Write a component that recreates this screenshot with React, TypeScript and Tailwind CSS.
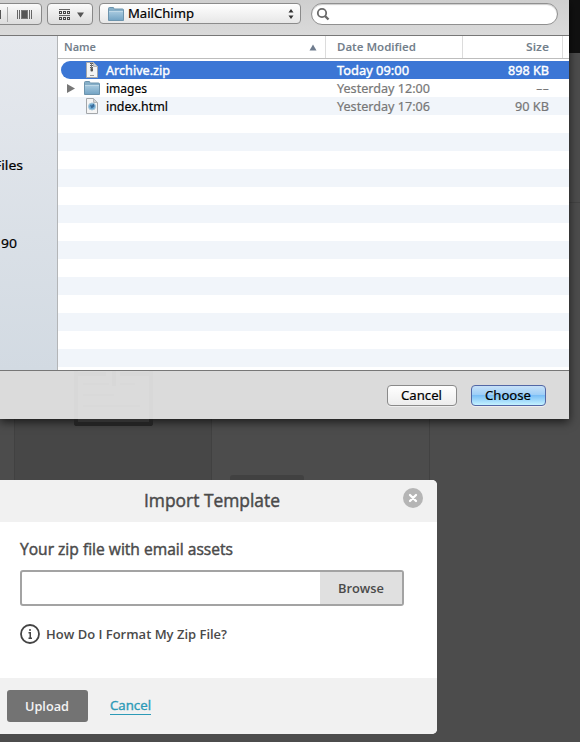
import React from "react";

const mac = "font-['Noto_Sans','Open_Sans',sans-serif]";

const files = [
  { name: "Archive.zip", date: "Today 09:00", size: "898 KB", kind: "zip" },
  { name: "images", date: "Yesterday 12:00", size: "--", kind: "folder" },
  { name: "index.html", date: "Yesterday 17:06", size: "90 KB", kind: "html" },
];

// A single line of text fitted to a fixed advance width; bold thickens its strokes slightly.
function Label({ text, width, size, fill, weight = 400, family = "Noto Sans", bold = 0 }: {
  text: string; width: number; size: number; fill: string; weight?: number; family?: string; bold?: number;
}) {
  return (
    <svg width={width} height="20" className="block shrink-0 overflow-visible">
      <text x="0" y="15" textLength={width} lengthAdjust="spacingAndGlyphs" fontSize={size} fontWeight={weight} fill={fill} stroke={bold ? fill : "none"} strokeWidth={bold} fontFamily={`"${family}", "Open Sans", sans-serif`}>{text}</text>
    </svg>
  );
}

function Folder() {
  return (
    <svg width="16" height="14" viewBox="0 0 16 14" className="block shrink-0">
      <defs>
        <linearGradient id="fold" x1="0" y1="0" x2="0" y2="1">
          <stop offset="0" stopColor="#a9cbe0" /><stop offset="1" stopColor="#75a5c5" />
        </linearGradient>
      </defs>
      <path d="M.5 3V1.5Q.5.5 1.500.5H5Q6 .5 6 1.500L6.500 2H14.500Q15.500 2 15.500 3V13.500H.5Z" fill="#86afc8" stroke="#6d94ad" />
      <path d="M1 4H15V13H1Z" fill="url(#fold)" />
      <path d="M1 4.500H15" stroke="#bed8e7" />
    </svg>
  );
}

function FileIcon({ kind }: { kind: string }) {
  if (kind === "folder") return <Folder />;
  return (
    <svg width="16" height="16" viewBox="0 0 16 16" className="block shrink-0">
      <path d="M2.500.5H9.500L13.500 4.500V15.500H2.500Z" fill="#f4f4f4" stroke="#a4a7aa" />
      <path d="M9.500.5V4.500H13.500Z" fill="#d1d3d4" stroke="#b4b7b9" />
      {kind === "zip" ? (
        <>
          <path d="M7.500 1V6" stroke="#5d5d5d" strokeWidth="3" strokeDasharray="1 1" />
          <path d="M7.500 1V7" stroke="#777" />
          <rect x="6.500" y="6" width="2.500" height="3.500" rx="1" fill="#555" />
          <path d="M6 13.500H10" stroke="#999" />
        </>
      ) : (
        <>
          <circle cx="8" cy="8.500" r="3.500" fill="#6daad3" stroke="#a5c6da" />
          <path d="M6 7L8 7.500 9.500 5.500 10.500 8 9 9.500 7.500 10.500Z" fill="#3a6a98" />
        </>
      )}
    </svg>
  );
}

function Toolbar() {
  return (
    <div className="flex h-[36px] border-b border-[#777] bg-gradient-to-b from-[#cfcfcf] to-[#dadada] pt-[3px]">
      <div className="-ml-1 flex h-[22px] w-[46px] rounded-[4px] border border-[#888] bg-gradient-to-b from-[#fafafa] to-[#dcdcdc]">
        <svg width="44" height="20" fill="none" stroke="#777">
          <path d="M3.500 6V15" stroke="#555" /><path d="M10.500 3V18" stroke="#aaa" />
          <path d="M20.500 6V15M34.500 6V15" stroke="#666" /><path d="M22.500 6V15M32.500 6V15" stroke="#666" />
          <rect x="24.500" y="6.500" width="6" height="8" fill="#555" stroke="#777" />
        </svg>
      </div>
      <div className="ml-[5px] h-[22px] w-[46px] rounded-[4px] border border-[#888] bg-gradient-to-b from-[#fafafa] to-[#dcdcdc]">
        <svg width="44" height="20" fill="none" stroke="#444">
          {[0, 1, 2].map((c) => <g key={c}><rect x={11.5 + c * 4} y="7.500" width="2" height="2" /><rect x={11.5 + c * 4} y="13.500" width="2" height="2" /></g>)}
          <path d="M11 5.500H22M11 11.500H22" stroke="#666" />
          <path d="M29 8.500H36L32.500 13.500Z" fill="#555" stroke="none" />
        </svg>
      </div>
      <div className="ml-[6px] flex h-[21px] w-[202px] items-center rounded-[4px] border border-[#8b8b8b] bg-gradient-to-b from-white to-[#e7e7e7] pl-2">
        <Folder />
        <div className="ml-1 -mt-[2px]"><Label text="MailChimp" width={66} size={13} fill="#000" bold={0.2} /></div>
        <svg width="6" height="12" className="ml-auto mr-[6px]" fill="#333"><path d="M.5 4.500L3 1L5.500 4.500ZM.5 7.500L3 11L5.500 7.500Z" /></svg>
      </div>
      <div className="ml-[10px] h-[22px] w-[247px] rounded-full border border-[#909090] bg-white shadow-[inset_0_1px_1px_#ccc]">
        <svg width="20" height="20" fill="none" stroke="#6a6a6a" strokeWidth="1.800"><circle cx="10" cy="9" r="4.200" /><path d="M13 12L16.500 15.500" strokeWidth="2.400" /></svg>
      </div>
    </div>
  );
}

function FileList() {
  return (
    <div className="flex-1 bg-white">
      <div className="flex h-[23px] items-start border-b border-[#bdbdbd] pl-[6px]">
        <Label text="Name" width={32} size={11.500} weight={600} fill="#74808c" />
        <svg width="8" height="7" className="ml-[213px] mt-[8px]" fill="#6f7c8e"><path d="M.5 6.500L4 .5L7.500 6.500Z" /></svg>
        <div className="ml-[8px] h-[22px] w-px bg-[#dcdcdc]" />
        <div className="ml-[11px]"><Label text="Date Modified" width={79} size={11.500} weight={600} fill="#74808c" /></div>
        <div className="ml-[46px] h-[22px] w-px bg-[#dcdcdc]" />
        <div className="ml-[63px]"><Label text="Size" width={23} size={11.500} weight={600} fill="#74808c" /></div>
        <div className="ml-[13px] h-[22px] w-px bg-[#dcdcdc]" />
      </div>
      <div className="h-[311px] overflow-hidden pt-[2px]">
        {Array.from({ length: 18 }, (_, i) => {
          const f = files[i];
          const picked = i === 0;
          const ink = picked ? "#fff" : "#777";
          const bold = picked ? 0.4 : 0.2;
          return (
            <div key={i} className={`flex h-[18px] items-center ${picked ? "ml-[3px] rounded-l-full bg-[#3b76d5]" : i % 2 === 0 ? "bg-[#f1f5fa] pl-[3px]" : "bg-white pl-[3px]"}`}>
              {f && (
                <>
                  <div className="w-[23px] pl-[6px]">{f.kind === "folder" && <svg width="8" height="9" fill="#777"><path d="M0 0L8 4.500L0 9Z" /></svg>}</div>
                  <FileIcon kind={f.kind} />
                  <div className="ml-[6px] w-[231px]"><Label text={f.name} width={i === 0 ? 64 : i === 1 ? 41 : 62} size={13} bold={bold} fill={picked ? "#fff" : "#000"} /></div>
                  <div className="w-[150px]"><Label text={f.date} width={picked ? 72 : 93} size={13} bold={bold} fill={ink} /></div>
                  <div className="flex w-[62px] justify-end"><Label text={f.size} width={i === 0 ? 41 : i === 1 ? 13 : 34} size={13} bold={bold} fill={ink} /></div>
                </>
              )}
            </div>
          );
        })}
      </div>
    </div>
  );
}

function FileDialog() {
  return (
    <div className="relative h-[419px] w-[569px] bg-[#dbdbdb] shadow-[0_3px_9px_rgba(0,0,0,.65)]">
      <Toolbar />
      <div className="flex h-[335px] border-b border-[#777]">
        <div className="w-[58px] shrink-0 border-r border-[#b3b5b7] bg-gradient-to-b from-[#e6e9ee] to-[#d2dae2]">
          <div className="-ml-[6px] pt-[119px]"><Label text="Files" width={29} size={13} fill="#000" bold={0.2} /></div>
          <div className="ml-px pt-[58px]"><Label text="90" width={16} size={13} fill="#000" bold={0.2} /></div>
        </div>
        <FileList />
      </div>
      <div className="flex h-[48px] justify-end pr-[23px] pt-[14px]">
        <svg width="79" height="48" className="absolute bottom-0 left-[74px]" fill="none" stroke="#d8d8d8">
          <path d="M2 0V48M77 0V48" strokeWidth="4" />
          <path d="M0 3H32M46 3H79M40 0V15" strokeWidth="4" />
          <path d="M9 13H35M46 13H61M9 24H40M9 35H66" strokeWidth="2" stroke="#d9d9d9" />
        </svg>
        <button className="h-[21px] w-[70px] rounded-[4px] border border-[#8a8a8a] bg-gradient-to-b from-white to-[#ededed] pl-[13px] shadow-[0_1px_0_#eee]"><div className="-mt-[2px]"><Label text="Cancel" width={41} size={13} fill="#000" bold={0.2} /></div></button>
        <button className="ml-[14px] h-[21px] w-[75px] rounded-[4px] border border-[#5367a5] bg-[linear-gradient(#c7e1f8,#9bcdf7_49%,#7bbff6_50%,#c4f2ff)] pl-[13px] shadow-[0_1px_0_#eee]"><div className="-mt-[2px]"><Label text="Choose" width={46} size={13} fill="#000" bold={0.2} /></div></button>
      </div>
    </div>
  );
}

function ImportModal() {
  return (
    <section className="relative mt-[61px] h-[254px] w-[437px] overflow-hidden rounded-r-[5px] bg-white">
      <header className="flex h-[42px] bg-[#f1f1f1] pl-[144px]">
        <div className="pt-[12px]"><Label text="Import Template" width={136} size={18} bold={0.45} fill="#4a4a4a" family="Open Sans" /></div>
        <svg width="20" height="20" className="ml-[123px] mt-2"><circle cx="10" cy="10" r="10" fill="#b5b5b5" /><path d="M7 7L13 13M13 7L7 13" stroke="#fff" strokeWidth="2.300" strokeLinecap="round" /></svg>
      </header>
      <div className="h-[156px] pl-5 pt-[18px]">
        <Label text="Your zip file with email assets" width={213} size={15.500} bold={0.45} fill="#4a4a4a" family="Open Sans" />
        <div className="mt-[10px] flex h-[36px] w-[384px] rounded-[3px] border-2 border-[#a3a3a3]">
          <div className="w-[298px]" />
          <div className="flex flex-1 justify-center bg-[#e0e0e0] pt-[6px]"><Label text="Browse" width={46} size={13} weight={600} fill="#4a4a4a" family="Open Sans" /></div>
        </div>
        <div className="mt-[18px] flex items-center">
          <svg width="20" height="20" fill="none" stroke="#444"><circle cx="10" cy="10" r="9" strokeWidth="1.800" /><path d="M8.500 8.750H10.250V14M8.500 14.250H12M10 5V7" strokeWidth="1.500" /></svg>
          <div className="ml-[6px]"><Label text="How Do I Format My Zip File?" width={181} size={13} weight={600} fill="#4a4a4a" family="Open Sans" /></div>
        </div>
      </div>
      <footer className="flex h-[56px] bg-[#f1f1f1] pl-[7px] pt-[12px]">
        <button className="h-[32px] w-[81px] rounded-[3px] bg-[#737373] pl-[18px]"><Label text="Upload" width={44} size={13} weight={600} fill="#f3f3f3" family="Open Sans" /></button>
        <div className="ml-[22px] mt-[5px] h-[20px] w-[41px] border-b border-[#2c9ab7]"><Label text="Cancel" width={41} size={13} bold={0.4} fill="#2c9ab7" family="Open Sans" /></div>
      </footer>
    </section>
  );
}

export default function App() {
  return (
    <main className={`relative h-[742px] w-[580px] overflow-hidden bg-[#4c4c4c] ${mac}`}>
      <div className="absolute right-0 top-0 h-[53px] w-[11px] bg-[#111]" />
      <div className="absolute right-0 top-[202px] h-px w-[11px] bg-[#434343]" />
      <div className="absolute left-[14px] top-[419px] h-[61px] w-[198px] border-x border-[#414141] bg-[#474747]" />
      <div className="absolute left-[429px] top-[419px] h-[61px] w-px bg-[#424242]" />
      <div className="absolute left-[230px] top-[475px] h-[8px] w-[74px] rounded-t-[3px] bg-[#414141]" />
      <FileDialog />
      <div className="absolute left-[74px] top-[419px] h-[7px] w-[79px] rounded-b-[3px] border-4 border-t-0 border-[#222] bg-[#303030]" />
      <ImportModal />
    </main>
  );
}
